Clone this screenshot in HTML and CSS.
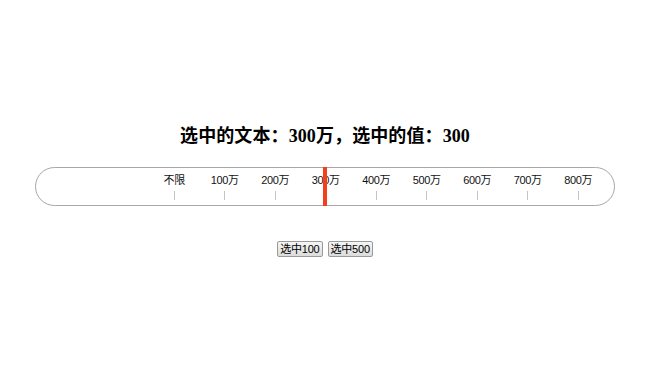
FILE: index.html
```html
<!DOCTYPE html>
<html>
<head>
<meta charset="utf-8">
<link rel="stylesheet" href="styles.css">
</head>
<body>
<div class="page">
  <h3 class="title">选中的文本：300万，选中的值：300</h3>
  <div class="track">
    <div class="scale">
      <div class="mark"><span class="label">不限</span><span class="tick"></span></div>
      <div class="mark"><span class="label">100万</span><span class="tick"></span></div>
      <div class="mark"><span class="label">200万</span><span class="tick"></span></div>
      <div class="mark"><span class="label">300万</span><span class="tick"></span></div>
      <div class="mark"><span class="label">400万</span><span class="tick"></span></div>
      <div class="mark"><span class="label">500万</span><span class="tick"></span></div>
      <div class="mark"><span class="label">600万</span><span class="tick"></span></div>
      <div class="mark"><span class="label">700万</span><span class="tick"></span></div>
      <div class="mark"><span class="label">800万</span><span class="tick"></span></div>
    </div>
    <div class="handle"></div>
  </div>
  <div class="actions">
    <button class="btn">选中100</button>
    <button class="btn">选中500</button>
  </div>
</div>
</body>
</html>
```
FILE: styles.css
```css
html, body {
  margin: 0;
  padding: 0;
  background: #fff;
}
.page {
  width: 650px;
  height: 384px;
  display: flex;
  flex-direction: column;
  align-items: center;
  font-family: "Liberation Sans", "Noto Sans CJK SC", sans-serif;
  color: #000;
}
.title {
  margin: 126px 0 0;
  font-family: "Liberation Serif", "Noto Sans CJK SC", serif;
  font-size: 18px;
  line-height: 20px;
  font-weight: bold;
  letter-spacing: 0.1px;
}
.track {
  position: relative;
  box-sizing: border-box;
  width: 580px;
  height: 39px;
  margin-top: 21px;
  border: 1px solid #a8a8a8;
  border-radius: 20px;
  padding-left: 113px;
}
.scale {
  display: flex;
}
.mark {
  width: 50.5px;
  display: flex;
  flex-direction: column;
  align-items: center;
}
.label {
  margin-top: 5px;
  font-size: 11px;
  line-height: 14px;
  white-space: nowrap;
  color: #111;
  letter-spacing: -0.3px;
}
.tick {
  width: 1px;
  height: 9px;
  margin-top: 4px;
  background: #c4c4c4;
}
.handle {
  position: absolute;
  left: 287px;
  top: -1px;
  width: 4px;
  height: 39px;
  background: #f4401a;
}
.actions {
  display: flex;
  gap: 5px;
  margin-top: 35px;
}
.btn {
  height: 16px;
  padding: 0 2px;
  font-family: "Liberation Sans", "Noto Sans CJK SC", sans-serif;
  font-size: 11px;
  line-height: 14px;
  letter-spacing: -0.2px;
  color: #000;
  border: 1px solid #9a9a9a;
  border-radius: 2px;
  background: linear-gradient(#f6f6f6, #dcdcdc);
}
```
